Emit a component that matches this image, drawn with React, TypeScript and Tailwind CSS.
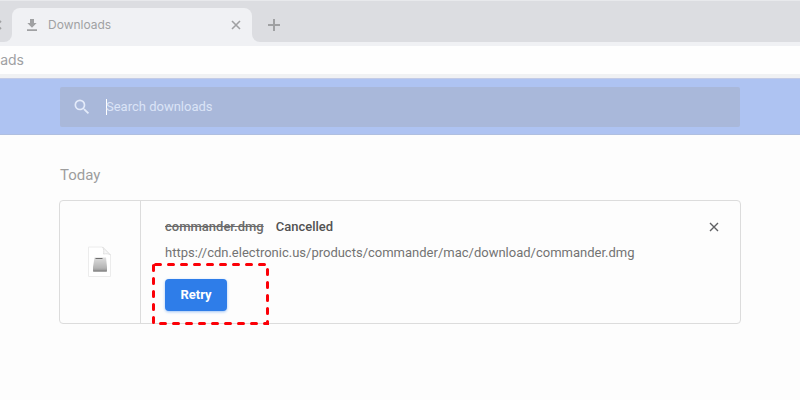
import { useState } from 'react';

function DownloadIcon() {
  return (
    <svg width="16" height="16" viewBox="0 0 24 24" fill="currentColor" aria-hidden="true">
      <path d="M19 9h-4V3H9v6H5l7 7 7-7zM4.500 18.500v2.500h15v-2.500z" />
    </svg>
  );
}

function CrossIcon({ size, stroke }: { size: number; stroke: number }) {
  return (
    <svg width={size} height={size} viewBox="0 0 10 10" fill="none" stroke="currentColor" strokeWidth={stroke} aria-hidden="true">
      <path d="M1 1l8 8M9 1l-8 8" />
    </svg>
  );
}

function SearchIcon() {
  return (
    <svg width="20" height="20" viewBox="0 0 24 24" fill="currentColor" aria-hidden="true">
      <path d="M15.500 14h-.79l-.28-.27A6.471 6.471 0 0 0 16 9.500 6.500 6.500 0 1 0 9.500 16c1.610 0 3.090-.59 4.230-1.570l.27.28v.79l5 4.990L20.490 19l-4.990-5zm-6 0C7.010 14 5 11.990 5 9.500S7.010 5 9.500 5 14 7.010 14 9.500 11.990 14 9.500 14z" />
    </svg>
  );
}

function DiskImageIcon() {
  return (
    <svg width="26" height="34" viewBox="0 0 26 34" fill="none" aria-hidden="true">
      <defs>
        <linearGradient id="drive" x1="0" y1="0" x2="0" y2="1">
          <stop offset="0" stopColor="#dedede" />
          <stop offset="0.75" stopColor="#b4b4b4" />
          <stop offset="1" stopColor="#8c8c8c" />
        </linearGradient>
      </defs>
      <path d="M1.500 2h14l8 8v21.500h-22z" fill="#fff" stroke="#ececec" />
      <path d="M15.500 2c1.500 2 1.500 4.500 1 7 2.500-.5 5-.5 7 1z" fill="#f7f7f7" stroke="#e2e2e2" />
      <path d="M7.500 12.500h11.500l1 9.500v4.500H6V22z" fill="url(#drive)" />
      <path d="M8.500 13.500h7" stroke="#6e6e6e" />
      <path d="M6.500 26h13" stroke="#858585" />
    </svg>
  );
}

function TabStrip() {
  return (
    <header className="bg-[#f0f1f4] text-[#a0a1a3]">
      <div className="h-px bg-[#e8e9ec]" />
      <div className="flex h-[45px] items-start">
        <div className="flex h-[41px] w-3 items-center overflow-hidden rounded-br-lg bg-[#dcdde1]">
          <span className="-ml-2 pt-1.5">
            <CrossIcon size={10} stroke={1.8} />
          </span>
        </div>
        <div className="h-full w-60">
          <div className="h-[30px] bg-[#dcdde1] pt-[7px]">
            <div className="flex h-[34px] items-center rounded-t-lg bg-[#f0f1f4] pr-[11px] pl-3">
              <DownloadIcon />
              <span className="ml-2 flex-1 font-['Inter',sans-serif] text-xs">Downloads</span>
              <button type="button" aria-label="Close tab">
                <CrossIcon size={10} stroke={1.6} />
              </button>
            </div>
          </div>
        </div>
        <div className="flex h-[41px] flex-1 items-center rounded-bl-lg bg-[#dcdde1] pt-[7px] pl-4">
          <button type="button" aria-label="New tab">
            <svg width="12" height="12" viewBox="0 0 12 12" stroke="currentColor" strokeWidth="2" aria-hidden="true">
              <path d="M6 0v12M0 6h12" />
            </svg>
          </button>
        </div>
      </div>
    </header>
  );
}

function SearchBar() {
  return (
    <div className="border-y border-t-[#c3cbe6] border-b-[#afbfe0] bg-[#aec3f2] px-[60px] pt-2 pb-[7px]">
      <label className="flex h-10 items-center rounded-xs bg-[#a9b8da] pl-3 text-[#e4ebfa]">
        <SearchIcon />
        <span className="ml-3.5 -mr-px h-4 w-px bg-white" />
        <input
          type="text"
          aria-label="Search downloads"
          placeholder="Search downloads"
          className="min-w-0 flex-1 bg-transparent text-[13px] outline-none placeholder:text-[#dbe4f7]"
        />
      </label>
    </div>
  );
}

function DownloadCard({ onRemove }: { onRemove: () => void }) {
  return (
    <article className="-mx-px flex h-[124px] rounded-[4px] border border-[#dcdcdc]">
      <div className="flex w-[81px] items-center justify-center border-r border-[#dcdcdc]">
        <DiskImageIcon />
      </div>
      <div className="min-w-0 flex-1 pt-4 pl-6 text-[13px] leading-5">
        <div className="flex gap-3 font-medium">
          <span className="text-[#6b6b6b] line-through">commander.dmg</span>
          <span className="text-[#525252]">Cancelled</span>
        </div>
        <a href="https://cdn.electronic.us/products/commander/mac/download/commander.dmg" className="mt-1.5 block truncate text-[#737373]">
          https://cdn.electronic.us/products/commander/mac/download/commander.dmg
        </a>
        <div className="relative mt-4 w-[62px]">
          <button type="button" className="h-8 w-full rounded-[4px] bg-[#2e7de9] font-bold text-white shadow-[0_1px_3px_#9fc4f5]">
            Retry
          </button>
          {/* Highlight around the retry action */}
          <svg className="pointer-events-none absolute -top-4 -left-[13px]" width="117" height="62" viewBox="0 0 117 62" fill="none" aria-hidden="true">
            <path
              d="M1.500 1.500h114v59H1.500z"
              stroke="#fb0007"
              strokeWidth="3"
              strokeDasharray="5 8"
              strokeDashoffset="-2"
              strokeLinecap="round"
            />
          </svg>
        </div>
      </div>
      <button type="button" aria-label="Remove from list" onClick={onRemove} className="mt-[21px] mr-[21px] h-2.5 self-start text-[#5f6063]">
        <CrossIcon size={10} stroke={1.4} />
      </button>
    </article>
  );
}

export default function App() {
  const [removed, setRemoved] = useState(false);

  return (
    <div className="min-h-screen bg-[#fdfdfd] font-['Roboto',sans-serif]">
      <TabStrip />
      <div className="h-7 bg-[#fefefe] font-['Inter',sans-serif] text-sm leading-7 text-[#a0a1a3]">
        <div className="flex w-6 justify-end">Downloads</div>
      </div>
      <div className="h-1 bg-[#f0f1f3]" />
      <SearchBar />
      <main className="px-[60px] pt-7">
        <h2 className="mb-3.5 pt-0.5 text-[15px] leading-[21px] text-[#9e9e9e]">Today</h2>
        {!removed && <DownloadCard onRemove={() => setRemoved(true)} />}
      </main>
    </div>
  );
}
